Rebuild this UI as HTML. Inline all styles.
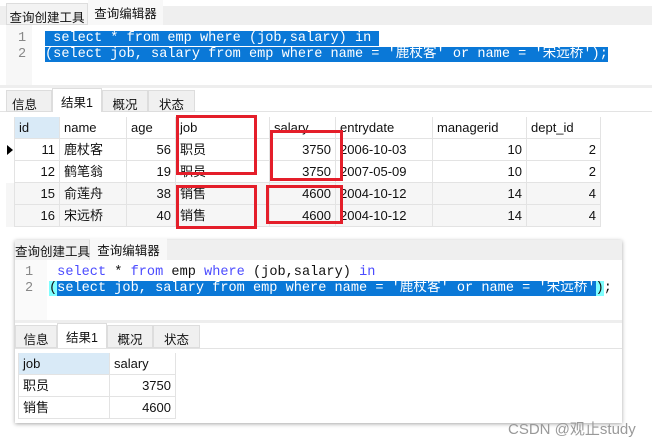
<!DOCTYPE html><html><head><meta charset="utf-8"><style>
*{margin:0;padding:0;box-sizing:border-box}
body{width:652px;height:440px;background:#fff;position:relative;overflow:hidden;font-family:"Liberation Sans","Noto Sans CJK SC",sans-serif;font-size:12px;color:#111}
.a{position:absolute;white-space:nowrap}
.mono{font-family:"Liberation Mono","Noto Sans CJK SC",monospace;font-size:13.6px;white-space:pre;line-height:16px}
.cell{position:absolute;height:22px;line-height:22px;padding:0 4px;border-right:1px solid #e3e3e3;border-bottom:1px solid #e3e3e3;font-size:13px;white-space:nowrap}
.r{text-align:right}
.red{position:absolute;border:3px solid #e41e2a}
.kw{color:#4b4bff}
.hl{background:#0a78d7;color:#fff}
.t{font-size:12.5px;text-align:center}
</style></head><body>
<!-- top panel -->
<div class="a" style="left:0;top:6px;width:652px;height:19px;background:#efefef"></div>
<div class="a t" style="left:6px;top:3px;width:82px;height:22px;background:#f3f3f3;border:1px solid #ddd;padding-top:3px">查询创建工具</div>
<div class="a t" style="left:88px;top:0;width:75px;height:25px;background:#f8f8f8;padding-top:3px">查询编辑器</div>
<div class="a" style="left:6px;top:25px;width:26px;height:60px;background:#f7f7f7"></div>
<div class="a mono" style="left:18px;top:31px;color:#888">1<br>2</div>
<div class="a mono" style="left:45px;top:31px"><span class="hl"> select * from emp where (job,salary) in </span></div>
<div class="a mono" style="left:45px;top:47px"><span class="hl">(select job, salary from emp where name = '鹿杖客' or name = '宋远桥');</span></div>
<div class="a" style="left:0;top:85px;width:652px;height:3px;background:#eee"></div>
<div class="a" style="left:0;top:88px;width:652px;height:24px;background:#fff;border-bottom:1px solid #e3e3e3"></div>
<div class="a t" style="left:6px;top:90px;width:46px;height:22px;background:#f0f0f0;border:1px solid #ddd;padding-top:3px;text-align:left;padding-left:5px">信息</div>
<div class="a t" style="left:52px;top:88px;width:50px;height:24px;background:#fff;border:1px solid #ddd;border-bottom:none;padding-top:3px">结果1</div>
<div class="a t" style="left:102px;top:90px;width:46px;height:22px;background:#f0f0f0;border:1px solid #ddd;padding-top:3px">概况</div>
<div class="a t" style="left:148px;top:90px;width:47px;height:22px;background:#f0f0f0;border:1px solid #ddd;padding-top:3px">状态</div>
<!-- table -->
<div class="a" style="left:6px;top:183px;width:595px;height:44px;background:#f6f6f6"></div>
<div class="a" style="left:6px;top:117px;width:9px;height:110px;border-right:1px solid #e3e3e3"></div>
<div class="a" style="left:7px;top:145px;width:0;height:0;border-left:6px solid #000;border-top:5px solid transparent;border-bottom:5px solid transparent"></div>
<div class="cell" style="left:15px;top:117px;width:45px;background:#d9eaf7">id</div>
<div class="cell" style="left:60px;top:117px;width:67px">name</div>
<div class="cell" style="left:127px;top:117px;width:49px">age</div>
<div class="cell" style="left:176px;top:117px;width:94px">job</div>
<div class="cell" style="left:270px;top:117px;width:66px">salary</div>
<div class="cell" style="left:336px;top:117px;width:97px">entrydate</div>
<div class="cell" style="left:433px;top:117px;width:94px">managerid</div>
<div class="cell" style="left:527px;top:117px;width:74px">dept_id</div>

<div class="cell r" style="left:15px;top:139px;width:45px">11</div><div class="cell" style="left:60px;top:139px;width:67px">鹿杖客</div><div class="cell r" style="left:127px;top:139px;width:49px">56</div><div class="cell" style="left:176px;top:139px;width:94px">职员</div><div class="cell r" style="left:270px;top:139px;width:66px">3750</div><div class="cell" style="left:336px;top:139px;width:97px">2006-10-03</div><div class="cell r" style="left:433px;top:139px;width:94px">10</div><div class="cell r" style="left:527px;top:139px;width:74px">2</div>
<div class="cell r" style="left:15px;top:161px;width:45px">12</div><div class="cell" style="left:60px;top:161px;width:67px">鹤笔翁</div><div class="cell r" style="left:127px;top:161px;width:49px">19</div><div class="cell" style="left:176px;top:161px;width:94px">职员</div><div class="cell r" style="left:270px;top:161px;width:66px">3750</div><div class="cell" style="left:336px;top:161px;width:97px">2007-05-09</div><div class="cell r" style="left:433px;top:161px;width:94px">10</div><div class="cell r" style="left:527px;top:161px;width:74px">2</div>
<div class="cell r" style="left:15px;top:183px;width:45px">15</div><div class="cell" style="left:60px;top:183px;width:67px">俞莲舟</div><div class="cell r" style="left:127px;top:183px;width:49px">38</div><div class="cell" style="left:176px;top:183px;width:94px">销售</div><div class="cell r" style="left:270px;top:183px;width:66px">4600</div><div class="cell" style="left:336px;top:183px;width:97px">2004-10-12</div><div class="cell r" style="left:433px;top:183px;width:94px">14</div><div class="cell r" style="left:527px;top:183px;width:74px">4</div>
<div class="cell r" style="left:15px;top:205px;width:45px">16</div><div class="cell" style="left:60px;top:205px;width:67px">宋远桥</div><div class="cell r" style="left:127px;top:205px;width:49px">40</div><div class="cell" style="left:176px;top:205px;width:94px">销售</div><div class="cell r" style="left:270px;top:205px;width:66px">4600</div><div class="cell" style="left:336px;top:205px;width:97px">2004-10-12</div><div class="cell r" style="left:433px;top:205px;width:94px">14</div><div class="cell r" style="left:527px;top:205px;width:74px">4</div>

<div class="red" style="left:176px;top:115px;width:81px;height:60px"></div>
<div class="red" style="left:176px;top:185px;width:81px;height:44px"></div>
<div class="red" style="left:270px;top:130px;width:73px;height:51px"></div>
<div class="red" style="left:266px;top:185px;width:77px;height:39px"></div>

<!-- second panel -->
<div class="a" style="left:15px;top:240px;width:607px;height:183px;background:#fff;box-shadow:0 1px 4px rgba(0,0,0,.35)"></div>
<div class="a" style="left:15px;top:240px;width:607px;height:20px;background:#efefef"></div>
<div class="a t" style="left:15px;top:240px;width:75px;height:20px;background:#efefef;border-right:1px solid #ddd;padding-top:1px">查询创建工具</div>
<div class="a t" style="left:90px;top:238px;width:77px;height:22px;background:#f8f8f8;padding-top:2px">查询编辑器</div>
<div class="a" style="left:15px;top:260px;width:32px;height:60px;background:#fafafa"></div>
<div class="a mono" style="left:25px;top:265px;color:#888">1<br>2</div>
<div class="a mono" style="left:49px;top:265px"> <span class="kw">select</span> * <span class="kw">from</span> emp <span class="kw">where</span> (job,salary) <span class="kw">in</span></div>
<div class="a mono" style="left:49px;top:281px"><span style="background:#80ffff">(</span><span class="hl">select job, salary from emp where name = '鹿杖客' or name = '宋远桥'</span><span style="background:#80ffff">)</span>;</div>
<div class="a" style="left:15px;top:320px;width:607px;height:3px;background:#eee"></div>
<div class="a" style="left:15px;top:348px;width:607px;height:1px;background:#e3e3e3"></div>
<div class="a t" style="left:15px;top:325px;width:42px;height:23px;background:#f0f0f0;border:1px solid #ddd;padding-top:3px">信息</div>
<div class="a t" style="left:57px;top:323px;width:50px;height:25px;background:#fff;border:1px solid #ddd;border-bottom:none;padding-top:3px">结果1</div>
<div class="a t" style="left:107px;top:325px;width:46px;height:23px;background:#f0f0f0;border:1px solid #ddd;padding-top:3px">概况</div>
<div class="a t" style="left:153px;top:325px;width:47px;height:23px;background:#f0f0f0;border:1px solid #ddd;padding-top:3px">状态</div>
<div class="a" style="left:15px;top:353px;width:4px;height:66px;border-right:1px solid #e3e3e3"></div>
<div class="cell" style="left:19px;top:353px;width:91px;background:#d9eaf7">job</div>
<div class="cell" style="left:110px;top:353px;width:66px">salary</div>
<div class="cell" style="left:19px;top:375px;width:91px">职员</div><div class="cell r" style="left:110px;top:375px;width:66px">3750</div>
<div class="cell" style="left:19px;top:397px;width:91px">销售</div><div class="cell r" style="left:110px;top:397px;width:66px">4600</div>

<div class="a" style="left:508px;top:418px;font-size:15px;color:#999">CSDN @观止study</div>
</body></html>
